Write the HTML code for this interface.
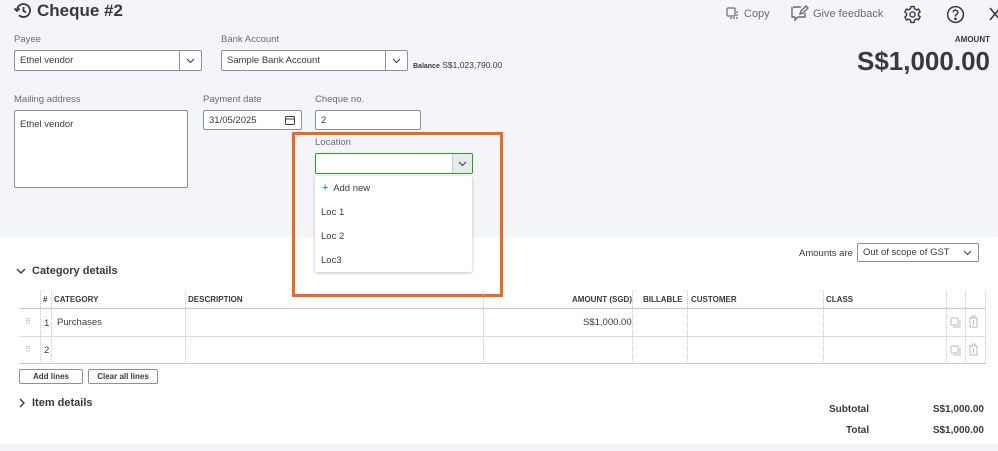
<!DOCTYPE html>
<html><head><meta charset="utf-8"><style>
*{box-sizing:border-box;margin:0;padding:0}
body{width:998px;height:451px;overflow:hidden;background:#fff;font-family:"Liberation Sans",sans-serif;color:#393a3d;position:relative;font-size:9.5px}
.a{position:absolute}
.top{left:0;top:0;width:998px;height:237px;background:#f4f5f8}
.lbl{font-size:9.5px;color:#6b6c72}
.inp{background:#fff;border:1px solid #8d9096;border-radius:2px;font-size:9.5px;padding:0 5px;display:flex;align-items:center}
.dd{position:absolute;right:0;top:0;bottom:0;width:22px;border-left:1px solid #8d9096;display:flex;align-items:center;justify-content:center}
.hd{font-size:8px;font-weight:bold;color:#393a3d}
.vl{position:absolute;top:291px;height:73px;border-left:1px dotted #c8c9cc}
.hl{position:absolute;left:19px;width:966px;border-top:1px solid #dcdde0}
.btn{border:1px solid #8d9096;border-radius:2px;background:#fff;font-size:8px;font-weight:bold;display:flex;align-items:center;justify-content:center}
</style></head><body>
<div class="a top"></div>
<div class="a" style="left:0;top:444px;width:998px;height:7px;background:#f4f5f8"></div>
<svg class="a" style="left:13px;top:2px" width="19" height="17" viewBox="0 0 19 17" fill="none" stroke="#393a3d" stroke-width="1.8"><path d="M4 8.5a6.5 6.5 0 1 1 2 4.7"/><path d="M1.5 6.5l2.5 2.5 2.5-2.5"/><path d="M10.5 5v4l2.5 1.5"/></svg>
<div class="a" style="left:37px;top:1px;font-size:17px;font-weight:bold;color:#393a3d">Cheque #2</div>

<svg class="a" style="left:726px;top:7px" width="14" height="14" viewBox="0 0 14 14" fill="none" stroke="#6b6c72" stroke-width="1.2"><rect x="1" y="1" width="8" height="8" rx="1"/><path d="M11 4v7H4" stroke-dasharray="2 1"/></svg>
<div class="a" style="left:744px;top:8px;font-size:11px;color:#6b6c72">Copy</div>
<svg class="a" style="left:790px;top:4px" width="19" height="19" viewBox="0 0 19 19" fill="none" stroke="#6b6c72" stroke-width="1.4"><path d="M3 3h8M2 3v10h3v3l3-3h7V9"/><path d="M10 10l1-3 5-5 2 2-5 5z"/></svg>
<div class="a" style="left:813px;top:8px;font-size:11px;color:#6b6c72">Give feedback</div>
<svg class="a" style="left:903px;top:5px" width="19" height="19" viewBox="0 0 24 24" fill="none" stroke="#393a3d" stroke-width="1.8"><circle cx="12" cy="12" r="3.2"/><path d="M10 2h4l.6 2.8 2.3 1.3 2.7-.9 2 3.5-2.1 1.9v2.6l2.1 1.9-2 3.5-2.7-.9-2.3 1.3L14 22h-4l-.6-2.8-2.3-1.3-2.7.9-2-3.5 2.1-1.9v-2.6L2.4 8.7l2-3.5 2.7.9 2.3-1.3z"/></svg>
<svg class="a" style="left:946px;top:5px" width="19" height="19" viewBox="0 0 20 20" fill="none" stroke="#393a3d" stroke-width="1.6"><circle cx="10" cy="10" r="8.3"/><path d="M7.6 7.8a2.4 2.4 0 1 1 3.3 2.2c-.6.3-.9.8-.9 1.5v.6"/><circle cx="10" cy="14.6" r=".6" fill="#393a3d"/></svg>
<svg class="a" style="left:989px;top:7px" width="12" height="14" viewBox="0 0 12 14" stroke="#393a3d" stroke-width="1.6"><path d="M1 1l10 12M11 1L1 13"/></svg>
<div class="a" style="right:8px;top:35px;font-size:8px;font-weight:bold;color:#393a3d">AMOUNT</div>
<div class="a" style="right:8px;top:46px;font-size:26px;font-weight:bold;color:#393a3d">S$1,000.00</div>

<div class="a lbl" style="left:14px;top:34px">Payee</div>
<div class="a inp" style="left:14px;top:50px;width:188px;height:21px">Ethel vendor<div class="dd"><svg width="9" height="6" viewBox="0 0 9 6" fill="none" stroke="#393a3d"><path d="M1 1l3.5 3.5L8 1"/></svg></div></div>
<div class="a lbl" style="left:221px;top:34px">Bank Account</div>
<div class="a inp" style="left:221px;top:50px;width:187px;height:21px">Sample Bank Account<div class="dd"><svg width="9" height="6" viewBox="0 0 9 6" fill="none" stroke="#393a3d"><path d="M1 1l3.5 3.5L8 1"/></svg></div></div>
<div class="a" style="left:413px;top:60px;font-size:8.5px"><b style="font-size:7px">Balance</b> S$1,023,790.00</div>

<div class="a lbl" style="left:14px;top:94px">Mailing address</div>
<div class="a inp" style="left:14px;top:110px;width:174px;height:78px;align-items:flex-start;padding-top:8px">Ethel vendor</div>
<div class="a lbl" style="left:203px;top:94px">Payment date</div>
<div class="a inp" style="left:203px;top:110px;width:99px;height:20px">31/05/2025<svg style="position:absolute;right:6px;top:4px" width="10" height="10" viewBox="0 0 10 10" fill="none" stroke="#393a3d"><rect x=".5" y="1.5" width="9" height="8" rx="1"/><path d="M.5 4h9"/></svg></div>
<div class="a lbl" style="left:315px;top:94px">Cheque no.</div>
<div class="a inp" style="left:315px;top:110px;width:106px;height:20px">2</div>

<div class="a lbl" style="left:315px;top:137px">Location</div>
<div class="a" style="left:315px;top:153px;width:158px;height:21px;background:#fff;border:1.5px solid #2ca01c;border-radius:2px"><div style="position:absolute;right:0;top:0;bottom:0;width:20px;background:#e8e9ec;border-left:1px solid #c8c9cc;display:flex;align-items:center;justify-content:center"><svg width="9" height="6" viewBox="0 0 9 6" fill="none" stroke="#393a3d"><path d="M1 1l3.5 3.5L8 1"/></svg></div></div>
<div class="a" style="left:315px;top:176px;width:157px;height:96px;background:#fff;box-shadow:0 1px 3px rgba(0,0,0,.25);border-radius:2px;font-size:9.5px">
<div class="a" style="left:7px;top:6px"><span style="color:#0077c5;font-size:11px">+</span>&nbsp; Add new</div>
<div class="a" style="left:6px;top:31px">Loc 1</div>
<div class="a" style="left:6px;top:55px">Loc 2</div>
<div class="a" style="left:6px;top:79px">Loc3</div>
</div>
<div class="a" style="left:292px;top:132px;width:211px;height:165px;border:3px solid #f4661f"></div>

<div class="a lbl" style="left:799px;top:248px;color:#393a3d">Amounts are</div>
<div class="a inp" style="left:857px;top:243px;width:122px;height:19px">Out of scope of GST<svg style="position:absolute;right:6px;top:6px" width="9" height="6" viewBox="0 0 9 6" fill="none" stroke="#393a3d"><path d="M1 1l3.5 3.5L8 1"/></svg></div>

<svg class="a" style="left:16px;top:267px" width="10" height="8" viewBox="0 0 10 8" fill="none" stroke="#393a3d" stroke-width="1.4"><path d="M1 2l4 4 4-4"/></svg>
<div class="a" style="left:32px;top:265px;font-size:11px;font-weight:bold">Category details</div>

<div class="hl" style="top:308px;border-color:#c8c9cc"></div>
<div class="hl" style="top:336px"></div>
<div class="hl" style="top:363px;border-color:#c8c9cc"></div>
<div class="vl" style="left:40px"></div><div class="vl" style="left:51px"></div><div class="vl" style="left:185px"></div><div class="vl" style="left:483px"></div><div class="vl" style="left:632px"></div><div class="vl" style="left:687px"></div><div class="vl" style="left:823px"></div><div class="vl" style="left:946px"></div><div class="vl" style="left:965px"></div><div class="vl" style="left:985px"></div>
<div class="a hd" style="left:43px;top:295px">#</div>
<div class="a hd" style="left:54px;top:295px">CATEGORY</div>
<div class="a hd" style="left:188px;top:295px">DESCRIPTION</div>
<div class="a hd" style="left:572px;top:295px">AMOUNT (SGD)</div>
<div class="a hd" style="left:643px;top:295px">BILLABLE</div>
<div class="a hd" style="left:691px;top:295px">CUSTOMER</div>
<div class="a hd" style="left:826px;top:295px">CLASS</div>
<div class="a" style="left:25px;top:317px;color:#aaa;font-size:8px;letter-spacing:-1px">⠿</div>
<div class="a" style="left:25px;top:345px;color:#aaa;font-size:8px;letter-spacing:-1px">⠿</div>
<div class="a" style="left:44px;top:318px">1</div>
<div class="a" style="left:44px;top:345px">2</div>
<div class="a" style="left:57px;top:317px">Purchases</div>
<div class="a" style="left:583px;top:317px">S$1,000.00</div>
<svg class="a" style="left:950px;top:317px" width="12" height="12" viewBox="0 0 12 12" fill="none" stroke="#bbb"><rect x="1" y="1" width="7" height="7" rx="1"/><path d="M10 3v7H3"/></svg>
<svg class="a" style="left:968px;top:315px" width="11" height="13" viewBox="0 0 11 13" fill="none" stroke="#bbb"><path d="M1 3h9M4 3V1h3v2M2 3v9h7V3M5.5 5v5"/></svg>
<svg class="a" style="left:950px;top:345px" width="12" height="12" viewBox="0 0 12 12" fill="none" stroke="#bbb"><rect x="1" y="1" width="7" height="7" rx="1"/><path d="M10 3v7H3"/></svg>
<svg class="a" style="left:968px;top:343px" width="11" height="13" viewBox="0 0 11 13" fill="none" stroke="#bbb"><path d="M1 3h9M4 3V1h3v2M2 3v9h7V3M5.5 5v5"/></svg>

<div class="a btn" style="left:19px;top:369px;width:64px;height:15px">Add lines</div>
<div class="a btn" style="left:88px;top:369px;width:70px;height:15px">Clear all lines</div>

<svg class="a" style="left:18px;top:398px" width="8" height="10" viewBox="0 0 8 10" fill="none" stroke="#393a3d" stroke-width="1.4"><path d="M2 1l4 4-4 4"/></svg>
<div class="a" style="left:32px;top:397px;font-size:11px;font-weight:bold">Item details</div>

<div class="a" style="left:829px;top:404px;font-size:10px;font-weight:bold">Subtotal</div>
<div class="a" style="right:14px;top:404px;font-size:10px;font-weight:bold">S$1,000.00</div>
<div class="a" style="left:846px;top:425px;font-size:10px;font-weight:bold">Total</div>
<div class="a" style="right:14px;top:425px;font-size:10px;font-weight:bold">S$1,000.00</div>
</body></html>
